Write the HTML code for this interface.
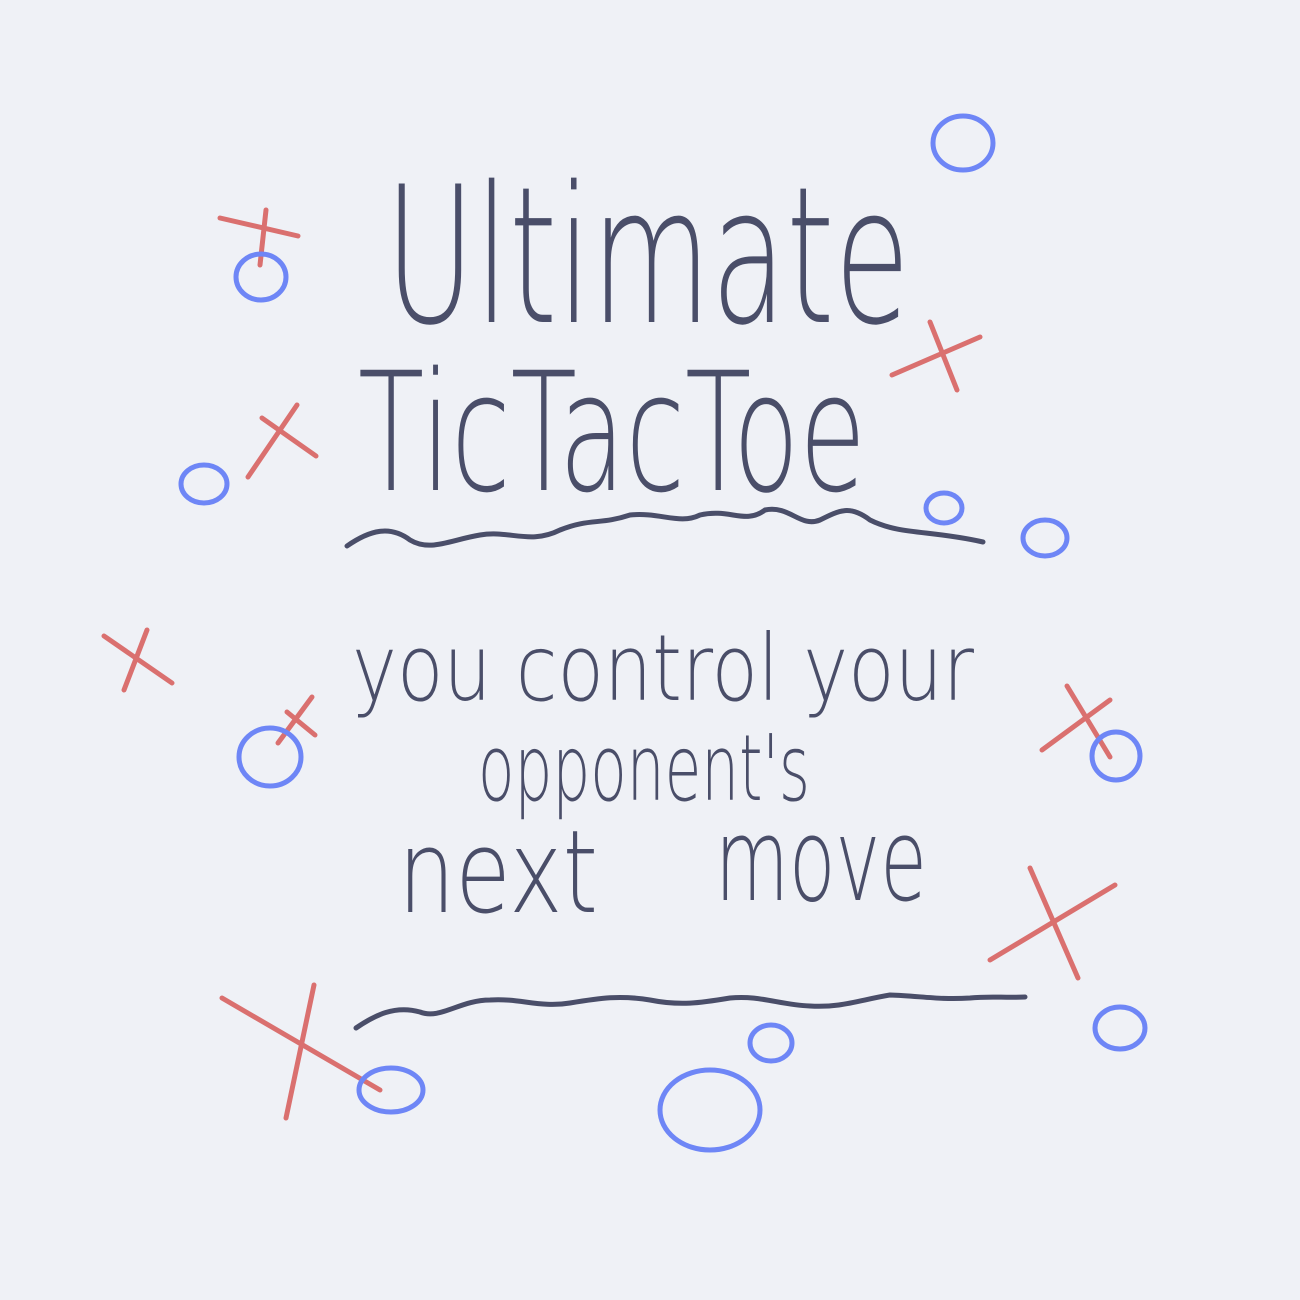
<!DOCTYPE html>
<html><head><meta charset="utf-8"><style>
html,body{margin:0;padding:0;background:#eff1f6;}
svg{display:block}
text{font-family:"DejaVu Sans","Liberation Sans",sans-serif;font-weight:200;fill:#4a4e69;}
</style></head><body>
<svg width="1300" height="1300" viewBox="0 0 1300 1300" xmlns="http://www.w3.org/2000/svg">
<rect width="1300" height="1300" fill="#eff1f6"/>
<text x="385" y="322" font-size="190" textLength="525" lengthAdjust="spacingAndGlyphs">Ultimate</text>
<text x="358" y="490" font-size="165" textLength="508" lengthAdjust="spacingAndGlyphs">TicTacToe</text>
<text x="352" y="700" font-size="92" textLength="622" lengthAdjust="spacingAndGlyphs">you control your</text>
<text x="478" y="800" font-size="92" textLength="332" lengthAdjust="spacingAndGlyphs">opponent's</text>
<text x="398" y="912" font-size="115" textLength="200" lengthAdjust="spacingAndGlyphs">next</text>
<text x="715" y="900" font-size="115" textLength="212" lengthAdjust="spacingAndGlyphs">move</text>
<g fill="none" stroke="#4a4e69" stroke-width="5" stroke-linecap="round">
<path d="M347 546 C370 530 390 525 410 540 C430 552 450 540 480 535 C510 530 530 545 560 530 C590 518 600 525 630 515 C660 512 680 525 700 515 C730 508 745 525 765 510 C790 505 800 528 820 520 C840 510 850 505 870 520 C900 535 930 530 983 542"/>
<path d="M356 1028 C375 1015 395 1005 420 1012 C440 1020 460 1000 490 1000 C520 998 540 1008 570 1003 C600 998 620 995 650 1000 C680 1006 700 1003 730 998 C760 995 780 1005 810 1006 C840 1008 860 1000 890 995 C920 996 940 1000 970 998 C990 996 1005 998 1025 997"/>
</g>
<g fill="none" stroke="#da706f" stroke-width="5" stroke-linecap="round">
<path d="M220 218 L298 236 M266 210 L260 265"/>
<path d="M248 477 L297 405 M262 418 L316 456"/>
<path d="M892 375 L980 337 M930 322 L957 390"/>
<path d="M104 636 L172 683 M147 630 L124 690"/>
<path d="M278 743 L312 697 M287 712 L315 735"/>
<path d="M1067 686 L1110 757 M1042 750 L1110 700"/>
<path d="M1030 868 L1078 978 M990 960 L1115 885"/>
<path d="M222 998 L380 1090 M314 985 L286 1118"/>
</g>
<g fill="none" stroke="#6e86f6" stroke-width="5">
<ellipse cx="963" cy="143" rx="30" ry="27"/>
<ellipse cx="261" cy="277" rx="25" ry="23"/>
<ellipse cx="204" cy="484" rx="23" ry="19"/>
<ellipse cx="944" cy="508" rx="18" ry="15"/>
<ellipse cx="1045" cy="538" rx="22" ry="18"/>
<ellipse cx="270" cy="757" rx="31" ry="29"/>
<ellipse cx="1116" cy="756" rx="24" ry="24"/>
<ellipse cx="1120" cy="1028" rx="25" ry="21"/>
<ellipse cx="391" cy="1090" rx="32" ry="22"/>
<ellipse cx="771" cy="1043" rx="21" ry="18"/>
<ellipse cx="710" cy="1110" rx="50" ry="40"/>
</g>
</svg>
</body></html>
